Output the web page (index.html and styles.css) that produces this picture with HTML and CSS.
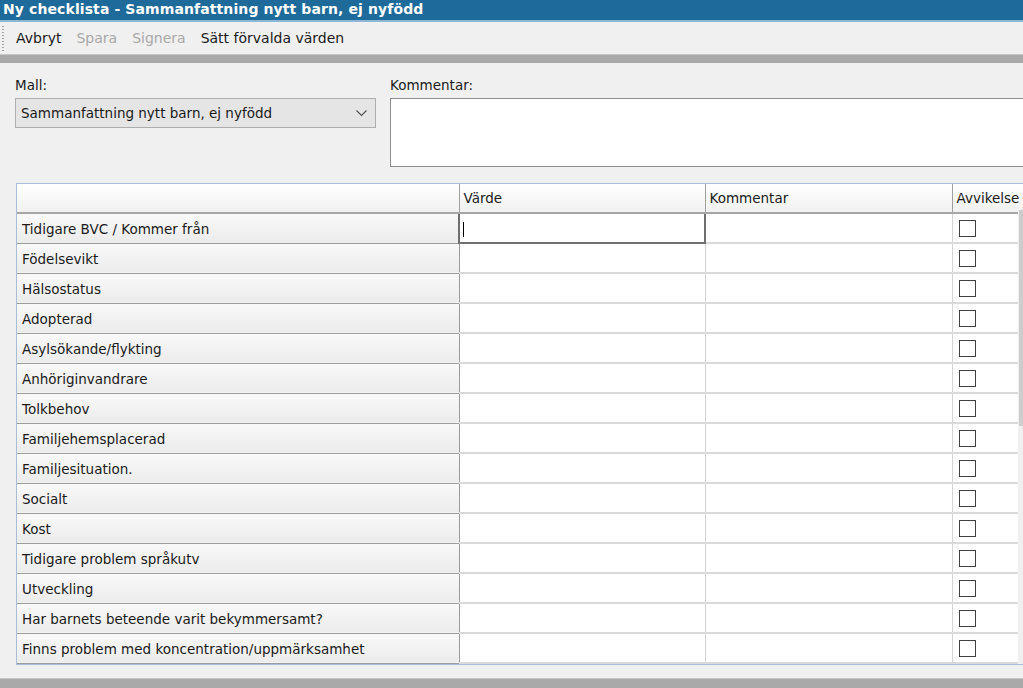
FILE: index.html
```html
<!DOCTYPE html>
<html lang="sv">
<head>
<meta charset="utf-8">
<title>Ny checklista</title>
<link rel="stylesheet" href="styles.css">
</head>
<body>
<div class="window">
  <div class="titlebar">Ny checklista - Sammanfattning nytt barn, ej nyfödd</div>
  <div class="toolbar">
    <span class="gripper"></span>
    <span class="tb-item">Avbryt</span>
    <span class="tb-item disabled">Spara</span>
    <span class="tb-item disabled">Signera</span>
    <span class="tb-item">Sätt förvalda värden</span>
  </div>
  <div class="divider"></div>
  <div class="content">
    <div class="form-row">
      <div class="field mall">
        <label class="lbl">Mall:</label>
        <div class="combo">
          <span>Sammanfattning nytt barn, ej nyfödd</span>
          <svg class="chev" width="11" height="7" viewBox="0 0 11 7"><path d="M0.5 0.5 L5.5 5.5 L10.5 0.5" fill="none" stroke="#505050" stroke-width="1.1"/></svg>
        </div>
      </div>
      <div class="field komm">
        <label class="lbl">Kommentar:</label>
        <div class="textarea"></div>
      </div>
    </div>
    <div class="grid-wrap">
      <table class="grid">
        <colgroup>
          <col class="c-head"><col class="c-val"><col class="c-kom"><col class="c-avv">
        </colgroup>
        <thead>
          <tr><th class="corner"></th><th>Värde</th><th>Kommentar</th><th class="last">Avvikelse</th></tr>
        </thead>
        <tbody>
          <tr><th>Tidigare BVC / Kommer från</th><td class="editing"><span class="caret"></span></td><td></td><td><span class="cb"></span></td></tr>
          <tr><th>Födelsevikt</th><td></td><td></td><td><span class="cb"></span></td></tr>
          <tr><th>Hälsostatus</th><td></td><td></td><td><span class="cb"></span></td></tr>
          <tr><th>Adopterad</th><td></td><td></td><td><span class="cb"></span></td></tr>
          <tr><th>Asylsökande/flykting</th><td></td><td></td><td><span class="cb"></span></td></tr>
          <tr><th>Anhöriginvandrare</th><td></td><td></td><td><span class="cb"></span></td></tr>
          <tr><th>Tolkbehov</th><td></td><td></td><td><span class="cb"></span></td></tr>
          <tr><th>Familjehemsplacerad</th><td></td><td></td><td><span class="cb"></span></td></tr>
          <tr><th>Familjesituation.</th><td></td><td></td><td><span class="cb"></span></td></tr>
          <tr><th>Socialt</th><td></td><td></td><td><span class="cb"></span></td></tr>
          <tr><th>Kost</th><td></td><td></td><td><span class="cb"></span></td></tr>
          <tr><th>Tidigare problem språkutv</th><td></td><td></td><td><span class="cb"></span></td></tr>
          <tr><th>Utveckling</th><td></td><td></td><td><span class="cb"></span></td></tr>
          <tr><th>Har barnets beteende varit bekymmersamt?</th><td></td><td></td><td><span class="cb"></span></td></tr>
          <tr><th>Finns problem med koncentration/uppmärksamhet</th><td></td><td></td><td><span class="cb"></span></td></tr>
        </tbody>
      </table>
      <div class="vscroll"><div class="thumb"></div></div>
    </div>
  </div>
  <div class="bottombar"></div>
</div>
</body>
</html>
```
FILE: styles.css
```css
html, body {
  margin: 0;
  padding: 0;
}
body {
  width: 1023px;
  height: 688px;
  overflow: hidden;
  background: #f0f0f0;
  font-family: "DejaVu Sans", Verdana, sans-serif;
  font-size: 13.5px;
  color: #1a1a1a;
}
.window {
  display: flex;
  flex-direction: column;
  height: 688px;
}
.titlebar {
  height: 20px;
  line-height: 19px;
  background: #1d6a9b;
  color: #fff;
  font-weight: bold;
  font-size: 14px;
  letter-spacing: 0.1px;
  padding-left: 3px;
  border-bottom: 2px solid #8ab8d6;
  box-sizing: content-box;
  white-space: nowrap;
  flex: none;
}
.toolbar {
  height: 32px;
  display: flex;
  align-items: center;
  background: #f0f0f0;
  position: relative;
  padding-left: 16px;
  gap: 15px;
  font-size: 14px;
  flex: none;
}
.gripper {
  position: absolute;
  left: 2px;
  top: 4px;
  width: 2px;
  height: 26px;
  background-image: linear-gradient(#a0a0a0 50%, transparent 50%);
  background-size: 2px 3px;
}
.tb-item {
  color: #1a1a1a;
  white-space: nowrap;
  padding-bottom: 1px;
}
.tb-item.disabled {
  color: #a8a8a8;
}
.divider {
  height: 8px;
  background: #a9a9a9;
  border-top: 1px solid #c8c8c8;
  flex: none;
}
.content {
  flex: 1;
  background: #f0f0f0;
  padding: 14px 0 0 15px;
  overflow: hidden;
}
.form-row {
  display: flex;
  gap: 14px;
  height: 106px;
}
.field {
  display: flex;
  flex-direction: column;
}
.lbl {
  height: 21px;
  line-height: 17px;
}
.mall {
  width: 361px;
}
.combo {
  height: 30px;
  box-sizing: border-box;
  border: 1px solid #adadad;
  background: #e5e5e5;
  display: flex;
  align-items: center;
  justify-content: space-between;
  padding: 0 8px 1px 5px;
}
.chev {
  margin-top: 2px;
}
.komm {
  flex: 1;
}
.textarea {
  height: 69px;
  box-sizing: border-box;
  border: 1px solid #8e8e8e;
  border-right: none;
  background: #fff;
}
.grid-wrap {
  position: relative;
  margin-left: 1px;
  width: 1020px;
  height: 482px;
  border-top: 1px solid #a8bed6;
  border-left: 1px solid #a8bed6;
  border-bottom: 1px solid #a8bed6;
  background: #fff;
  box-sizing: border-box;
  overflow: hidden;
}
.grid {
  border-collapse: collapse;
  table-layout: fixed;
  width: 1021px;
}
.c-head { width: 442px; }
.c-val { width: 246px; }
.c-kom { width: 247px; }
.c-avv { width: 86px; }
.grid th, .grid td {
  height: 30px;
  padding: 0;
  box-sizing: border-box;
  white-space: nowrap;
  overflow: hidden;
  font-weight: normal;
  text-align: left;
  vertical-align: middle;
}
.grid thead th {
  height: 29px;
  background: linear-gradient(#ffffff, #f1f1f1);
  border-right: 1px solid #a0a0a0;
  border-bottom: 2px solid #a6a6a6;
  padding: 0 0 1px 4px;
}
.grid thead th.last {
  border-right: none;
}
.grid tbody th {
  background: linear-gradient(#f9f9f9, #ebebeb);
  border: 1px solid #9c9c9c;
  border-left: none;
  padding: 1px 0 0 5px;
}
.grid tbody td {
  border-bottom: 2px solid #dadada;
  border-right: 1px solid #d4d4d4;
}
.grid tbody td.editing {
  border: 2px solid #707070;
  padding-left: 3px;
}
.caret {
  display: inline-block;
  width: 1px;
  height: 15px;
  background: #000;
  vertical-align: middle;
  margin-top: 2px;
}
.cb {
  display: block;
  width: 17px;
  height: 17px;
  box-sizing: border-box;
  border: 1px solid #404040;
  background: #fff;
  margin: 1px 0 0 6px;
}
.vscroll {
  position: absolute;
  top: 26px;
  left: 1001px;
  width: 18px;
  bottom: 0;
  background: #f0f0f0;
}
.thumb {
  margin-left: 1px;
  width: 16px;
  height: 216px;
  background: #cdcdcd;
}
.bottombar {
  height: 9px;
  background: #a9a9a9;
  border-top: 1px solid #c8c8c8;
  flex: none;
}
```
